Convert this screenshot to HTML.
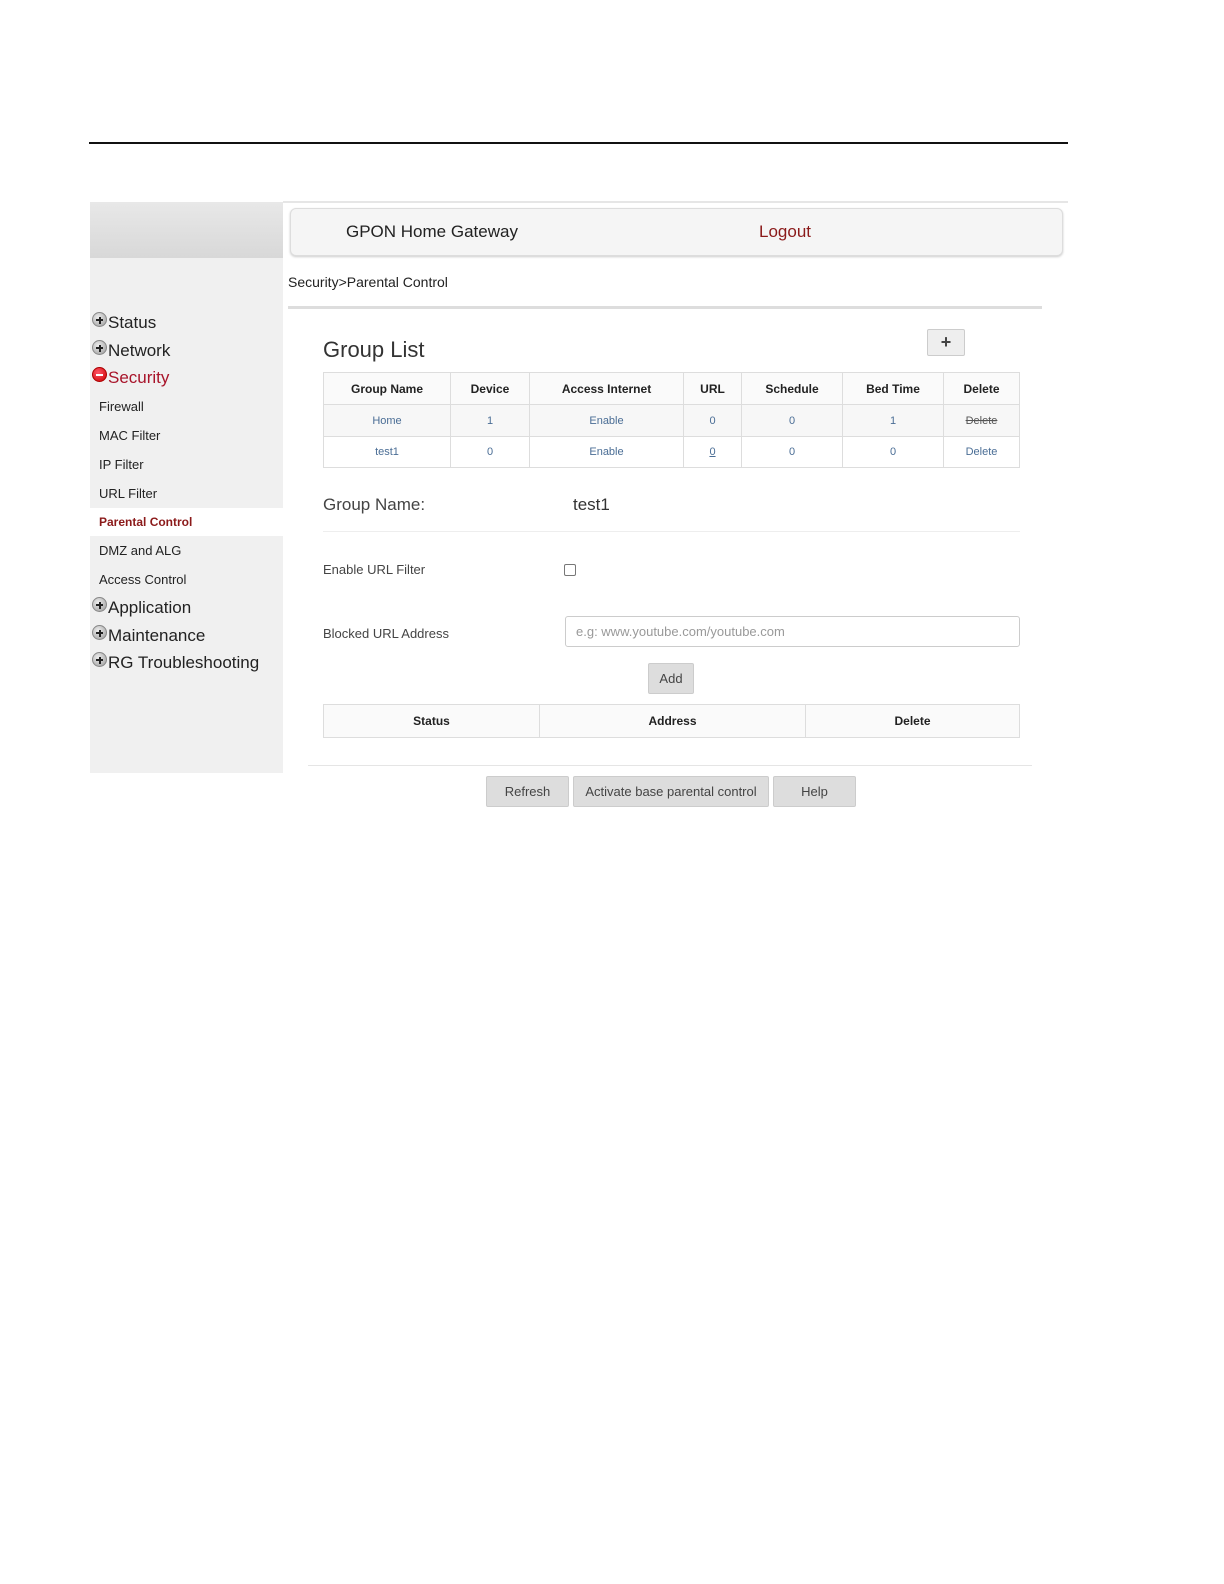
<!DOCTYPE html>
<html><head><meta charset="utf-8"><style>
*{margin:0;padding:0;box-sizing:border-box}
body{width:1224px;height:1584px;background:#fff;position:relative;font-family:"Liberation Sans",Arial,sans-serif;color:#333;overflow:hidden}
.a{position:absolute}
.t{position:absolute;white-space:nowrap}
.ic{position:absolute;width:15px;height:15px;border-radius:50%;background:radial-gradient(circle at 40% 35%,#eee,#999);border:1px solid #888}
.ic:before{content:"";position:absolute;left:3px;top:6px;width:7px;height:2px;background:#222}
.ic.p:after{content:"";position:absolute;left:5.5px;top:3.5px;width:2px;height:7px;background:#222}
.ic.m{background:radial-gradient(circle at 40% 35%,#f56,#c00);border-color:#a00}
.ic.m:before{background:#fff}
.nav{font-size:17px;color:#222}
.sub{font-size:13px;color:#222}
table{border-collapse:collapse;position:absolute;font-size:11px}
td,th{border:1px solid #ddd;text-align:center}
th{font-weight:bold;color:#222;font-size:12px;background:#fafafa}
.lk{color:#4a6d95}
.btn{position:absolute;background:#ddd;border:1px solid #ccc;border-radius:2px;font-size:13px;color:#444;text-align:center}
</style></head><body>
<div class="a" style="left:89px;top:142px;width:979px;height:2px;background:#111"></div>
<div class="a" style="left:283px;top:201px;width:785px;height:2px;background:#e6e6e6"></div>
<div class="a" style="left:90px;top:202px;width:193px;height:571px;background:#f0f0f0"></div>
<div class="a" style="left:90px;top:202px;width:193px;height:56px;background:linear-gradient(#e8e8e8,#d8d8d8)"></div>
<div class="a" style="left:90px;top:508px;width:193px;height:28px;background:#fff"></div>

<div class="ic p" style="left:92px;top:312px"></div><div class="t nav" style="left:108px;top:313px">Status</div>
<div class="ic p" style="left:92px;top:340px"></div><div class="t nav" style="left:108px;top:341px">Network</div>
<div class="ic m" style="left:92px;top:367px"></div><div class="t nav" style="left:108px;top:368px;color:#a8142a">Security</div>
<div class="t sub" style="left:99px;top:399px">Firewall</div>
<div class="t sub" style="left:99px;top:428px">MAC Filter</div>
<div class="t sub" style="left:99px;top:457px">IP Filter</div>
<div class="t sub" style="left:99px;top:486px">URL Filter</div>
<div class="t sub" style="left:99px;top:515px;font-size:12px;font-weight:bold;color:#8b1a1a">Parental Control</div>
<div class="t sub" style="left:99px;top:543px">DMZ and ALG</div>
<div class="t sub" style="left:99px;top:572px">Access Control</div>
<div class="ic p" style="left:92px;top:597px"></div><div class="t nav" style="left:108px;top:598px">Application</div>
<div class="ic p" style="left:92px;top:625px"></div><div class="t nav" style="left:108px;top:626px">Maintenance</div>
<div class="ic p" style="left:92px;top:652px"></div><div class="t nav" style="left:108px;top:653px">RG Troubleshooting</div>

<div class="a" style="left:290px;top:208px;width:773px;height:48px;background:#f5f5f5;border:1px solid #ddd;border-radius:6px;box-shadow:0 1px 2px #ccc"></div>
<div class="t" style="left:346px;top:222px;font-size:17px;color:#222">GPON Home Gateway</div>
<div class="t" style="left:759px;top:222px;font-size:17px;color:#8b1a1a">Logout</div>
<div class="t" style="left:288px;top:274px;font-size:14px;color:#222">Security&gt;Parental Control</div>
<div class="a" style="left:288px;top:306px;width:754px;height:3px;background:#ddd"></div>

<div class="t" style="left:323px;top:337px;font-size:22px;color:#333">Group List</div>
<div class="btn" style="left:927px;top:329px;width:38px;height:27px;background:#eee;font-size:18px;font-weight:bold;line-height:24px">+</div>
<table style="left:323px;top:372px;width:697px">
<tr style="height:32px"><th style="width:127px">Group Name</th><th style="width:79px">Device</th><th style="width:154px">Access Internet</th><th style="width:58px">URL</th><th style="width:101px">Schedule</th><th style="width:101px">Bed Time</th><th>Delete</th></tr>
<tr style="height:32px;background:#f7f7f7"><td class="lk">Home</td><td class="lk">1</td><td class="lk">Enable</td><td class="lk">0</td><td class="lk">0</td><td class="lk">1</td><td style="color:#555;text-decoration:line-through">Delete</td></tr>
<tr style="height:31px"><td class="lk">test1</td><td class="lk">0</td><td class="lk">Enable</td><td class="lk" style="text-decoration:underline">0</td><td class="lk">0</td><td class="lk">0</td><td class="lk">Delete</td></tr>
</table>

<div class="t" style="left:323px;top:495px;font-size:17px;color:#444">Group Name:</div>
<div class="t" style="left:573px;top:495px;font-size:17px;color:#333">test1</div>
<div class="a" style="left:323px;top:531px;width:697px;height:1px;background:#eee"></div>
<div class="t" style="left:323px;top:562px;font-size:13px;color:#444">Enable URL Filter</div>
<div class="a" style="left:564px;top:564px;width:12px;height:12px;border:1px solid #777;border-radius:2px;background:#fff"></div>
<div class="t" style="left:323px;top:626px;font-size:13px;color:#444">Blocked URL Address</div>
<div class="a" style="left:565px;top:616px;width:455px;height:31px;border:1px solid #ccc;border-radius:3px"></div>
<div class="t" style="left:576px;top:624px;font-size:13px;color:#999">e.g: www.youtube.com/youtube.com</div>
<div class="btn" style="left:648px;top:663px;width:46px;height:31px;line-height:29px">Add</div>
<table style="left:323px;top:704px;width:697px">
<tr style="height:33px"><th style="width:216px">Status</th><th style="width:266px">Address</th><th>Delete</th></tr>
</table>
<div class="a" style="left:308px;top:765px;width:724px;height:1px;background:#e5e5e5"></div>
<div class="btn" style="left:486px;top:776px;width:83px;height:31px;line-height:29px">Refresh</div>
<div class="btn" style="left:573px;top:776px;width:196px;height:31px;line-height:29px">Activate base parental control</div>
<div class="btn" style="left:773px;top:776px;width:83px;height:31px;line-height:29px">Help</div>
</body></html>
